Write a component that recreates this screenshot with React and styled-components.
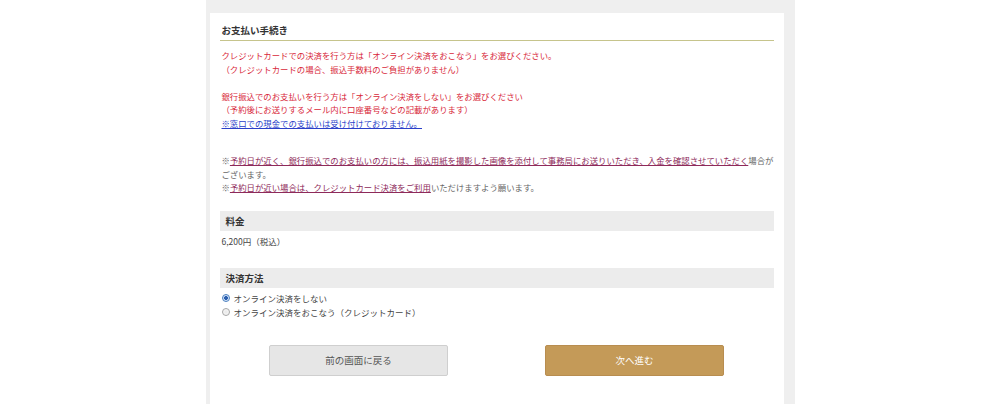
import React, { useState } from 'react';
import styled, { createGlobalStyle } from 'styled-components';

const Global = createGlobalStyle`
  body {
    margin: 0;
    background: #fff;
    font-family: "Noto Sans CJK JP", "Noto Sans", sans-serif;
  }
`;

const Column = styled.div`
  width: 589px;
  margin: 0 auto;
  background: #efefef;
  padding: 13px 11px 0 4px;
  box-sizing: border-box;
  height: 404px;
  overflow: hidden;
`;

const Card = styled.div`
  background: #fff;
  padding: 10px 10px 0 10px;
  height: 100%;
  box-sizing: border-box;
`;

const Title = styled.h2`
  margin: 0;
  font-size: 9.5px;
  font-weight: bold;
  color: #333;
  line-height: 14px;
  padding: 0 0 3px 2px;
  border-bottom: 1px solid #c6c48c;
`;

const Note = styled.p`
  margin: ${p => p.$top || 0}px 0 0;
  padding-left: 2px;
  font-size: 8.4px;
  line-height: 13.5px;
  color: ${p => p.$color || '#555'};
  white-space: nowrap;
`;

const Link = styled.a`
  color: ${p => p.$color};
  text-decoration: underline;
`;

const Head = styled.div`
  margin-top: ${p => p.$top}px;
  height: 20px;
  background: #ececec;
  display: flex;
  align-items: center;
  padding-left: 6px;
  font-size: 9.5px;
  font-weight: bold;
  color: #333;
`;

const Value = styled.div`
  margin-top: 3px;
  padding-left: 2px;
  font-size: 8.5px;
  line-height: 14px;
  color: #444;
`;

const Options = styled.div`
  margin-top: 3px;
  display: flex;
  flex-direction: column;
`;

const Option = styled.label`
  display: flex;
  align-items: center;
  gap: 4px;
  height: 14px;
  font-size: 8.5px;
  color: #444;
  padding-left: 2px;
`;

const Radio = styled.input`
  appearance: none;
  margin: 0;
  width: 8px;
  height: 8px;
  border-radius: 50%;
  border: 1px solid #a6a6a6;
  background: radial-gradient(circle, #e8e8e8 0, #fdfdfd 100%);
  box-sizing: border-box;
  &:checked {
    border-color: #4a7fc0;
    background: radial-gradient(circle, #2a5fb0 0, #2a5fb0 1.6px, #cfe0f5 2.2px, #eef4fb 100%);
  }
`;

const Buttons = styled.div`
  margin-top: 26px;
  display: flex;
  justify-content: center;
  gap: 97px;
`;

const Button = styled.button`
  width: 179px;
  height: 31px;
  border-radius: 2px;
  border: 1px solid ${p => (p.$primary ? '#b88d50' : '#cfcfcf')};
  background: ${p => (p.$primary ? '#c49a58' : '#e6e6e6')};
  color: ${p => (p.$primary ? '#fff' : '#555')};
  font-family: inherit;
  font-size: 9.5px;
  cursor: pointer;
`;

export default function App() {
  const [pay, setPay] = useState('offline');
  return (
    <>
      <Global />
      <Column>
        <Card>
          <Title>お支払い手続き</Title>
          <Note $top={8} $color="#d8283a">
            クレジットカードでの決済を行う方は「オンライン決済をおこなう」をお選びください。<br />
            （クレジットカードの場合、振込手数料のご負担がありません）<br />
            <br />
            銀行振込でのお支払いを行う方は「オンライン決済をしない」をお選びください<br />
            （予約後にお送りするメール内に口座番号などの記載があります）<br />
            <Link $color="#2b3fc9" href="#">※窓口での現金での支払いは受け付けておりません。</Link>
          </Note>
          <Note $top={24} $color="#666">
            ※<Link $color="#8e2a5a" href="#">予約日が近く、銀行振込でのお支払いの方には、振込用紙を撮影した画像を添付して事務局にお送りいただき、入金を確認させていただく</Link>場合が<br />
            ございます。<br />
            ※<Link $color="#8e2a5a" href="#">予約日が近い場合は、クレジットカード決済をご利用</Link>いただけますよう願います。
          </Note>
          <Head $top={16}>料金</Head>
          <Value>6,200円（税込）</Value>
          <Head $top={20}>決済方法</Head>
          <Options>
            <Option>
              <Radio type="radio" name="pay" checked={pay === 'offline'} onChange={() => setPay('offline')} />
              オンライン決済をしない
            </Option>
            <Option>
              <Radio type="radio" name="pay" checked={pay === 'online'} onChange={() => setPay('online')} />
              オンライン決済をおこなう（クレジットカード）
            </Option>
          </Options>
          <Buttons>
            <Button>前の画面に戻る</Button>
            <Button $primary>次へ進む</Button>
          </Buttons>
        </Card>
      </Column>
    </>
  );
}
